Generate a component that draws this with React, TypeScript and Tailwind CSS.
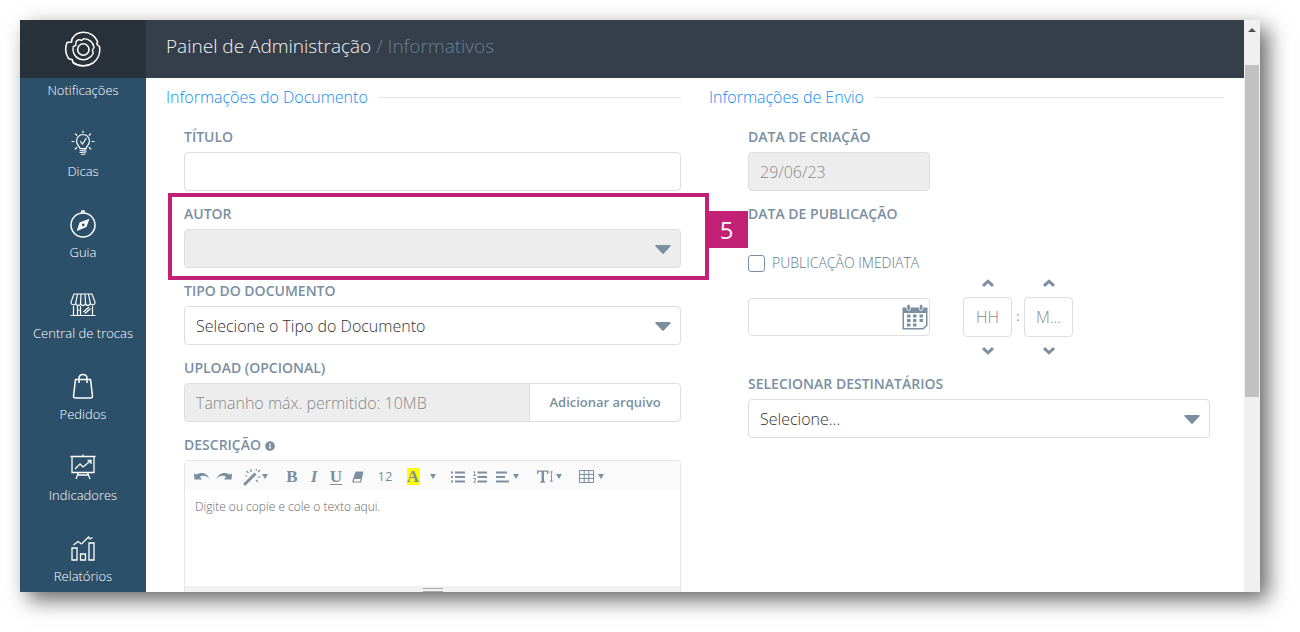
import React from 'react';
import { FaInfoCircle } from 'react-icons/fa';

type IconProps = { className?: string };

const LogoIcon: React.FC<IconProps> = ({ className }) => (
  <svg viewBox="0 0 38 38" className={className} fill="none" stroke="currentColor" strokeWidth="1.600" strokeLinejoin="round">
    <path d="M8 9C10.500 4.500 15 2.300 19.500 2.300C26 2.300 31.500 6 33.500 11.500L33 14.500L35.500 16.500C36.500 23 34 29.500 29 33C23 37 14.500 36.800 9 32.500L8.300 29.800L4.500 28.500C1.500 24 1 18 3 12.500L7.500 12Z" />
    <path d="M14.500 9.600L17.500 10.300L20 8.600C25 8.700 29.300 12.300 30 17.500L28.500 20L29.200 23.500C26.500 28.800 20.500 31 15.500 29C10.500 27 7.800 21.500 9.300 16.500L11.800 15.300L12 11.800C12.700 10.900 13.500 10.200 14.500 9.600Z" strokeWidth="1.400" />
    <circle cx="19.300" cy="19.500" r="5.700" />
  </svg>
);

const TipIcon = () => (
  <svg viewBox="0 0 28 28" className="size-7" fill="none" stroke="currentColor" strokeWidth="1.200" strokeLinecap="round">
    <path d="M11 19.500C11 17.500 7.500 16 7.500 12A6.500 6.500 0 0 1 20.500 12C20.500 16 17 17.500 17 19.500Z" />
    <path d="M11.500 12.500L13.500 15L17 9.500M11 21.500L17 20.800M11 23.500L17 22.800M12.500 25.500L16 25M14 2V3.500M6.500 5L7.800 6.200M21.500 5L20.200 6.200M3 12.500H4.800M23.200 12.500H25M6.200 20L7.800 18.500M21.800 20L20.200 18.500" />
  </svg>
);

const GuideIcon = () => (
  <svg viewBox="0 0 28 28" className="size-7" fill="none" stroke="currentColor" strokeWidth="1.500">
    <circle cx="14" cy="15" r="12" />
    <path d="M12.500 3L13 1H15L15.500 3" />
    <path fill="currentColor" stroke="none" fillRule="evenodd" d="M20.500 8.800L17.500 17L7.800 21L10.500 12.500ZM14.200 13.500A1.400 1.400 0 1 0 14.200 16.300A1.400 1.400 0 1 0 14.200 13.500Z" />
  </svg>
);

const StoreIcon = () => (
  <svg viewBox="0 0 28 28" className="size-7" fill="none" stroke="currentColor" strokeWidth="1.200">
    <path d="M5 3H23L26 11V12A2.400 2.400 0 0 1 21.300 12A2.400 2.400 0 0 1 16.500 12A2.400 2.400 0 0 1 11.600 12A2.400 2.400 0 0 1 6.700 12A2.400 2.400 0 0 1 2 12V11ZM8.500 3L6.700 12M12 3L11.600 12M16 3L16.500 12M19.500 3L21.300 12" />
    <path d="M4.500 15V24.500M8.500 15V24.500M11.500 15V24.500M23.500 15V24.500M1.500 24.500H26.500M9.800 18.500V20M14.500 21L20 16M16 22.500L21.500 17.500" />
  </svg>
);

const BagIcon = () => (
  <svg viewBox="0 0 28 28" className="size-7" fill="none" stroke="currentColor" strokeWidth="1.500" strokeLinejoin="round">
    <path d="M6.500 7.500H21.500L23.500 24C23.500 25.500 22.500 26 21.500 26H6.500C5.500 26 4.500 25.500 4.500 24ZM10 11V6.500C10 1 18 1 18 6.500V11" />
  </svg>
);

const BoardIcon = () => (
  <svg viewBox="0 0 28 28" className="size-7" fill="none" stroke="currentColor" strokeWidth="1.300">
    <path d="M1.500 3.500H26.500M14 1.500V3.500M3 3.500V19.500H25V3.500M9.500 19.500L7 26M18.500 19.500L21 26M9 22H19.500" />
    <path d="M6 16L11 11L14 14L22 7.500M18.500 7.500H22V11" />
  </svg>
);

const ReportIcon = () => (
  <svg viewBox="0 0 28 28" className="size-7" fill="none" stroke="currentColor" strokeWidth="1.300">
    <path d="M3 14H8V26H3ZM11.500 20H16.500V26H11.500ZM20 9H25V26H20Z" />
    <path d="M4.500 11L9 7.500L12.500 10L19.500 3L21 5L23.500 3.500" />
  </svg>
);

const MENU = [
  { label: 'Dicas', icon: <TipIcon /> },
  { label: 'Guia', icon: <GuideIcon /> },
  { label: 'Central de trocas', icon: <StoreIcon /> },
  { label: 'Pedidos', icon: <BagIcon /> },
  { label: 'Indicadores', icon: <BoardIcon /> },
  { label: 'Relatórios', icon: <ReportIcon /> },
];

const LABEL = 'block h-5 text-sm leading-[18px] font-semibold text-[#7b8fa0]';
const FIELD = 'mt-1 block h-[39px] w-full rounded border border-[#dedede] bg-white px-[11px] text-base font-light text-[#333] outline-none placeholder:text-[#888]';
const FIELD_DISABLED = 'mt-1 block h-[39px] w-full rounded border border-[#dedede] bg-[#ededed] px-[11px] text-base font-light text-[#888] outline-none placeholder:text-[#888]';

const Caret: React.FC<IconProps> = ({ className }) => (
  <svg viewBox="0 0 16 9" className={className} fill="currentColor">
    <path d="M1.200 0H14.800C15.800 0 16 .8 15.400 1.400L9 8.200C8.400 8.900 7.600 8.900 7 8.200L.6 1.400C0 .8.2 0 1.200 0Z" />
  </svg>
);

type SelectFieldProps = {
  id: string;
  label: string;
  option: string;
  disabled?: boolean;
};

const SelectField: React.FC<SelectFieldProps> = ({ id, label, option, disabled }) => (
  <div>
    <label htmlFor={id} className={LABEL}>{label}</label>
    <div className="relative">
      <select id={id} disabled={disabled} className={`appearance-none ${disabled ? FIELD_DISABLED : FIELD}`}>
        <option>{option}</option>
      </select>
      <Caret className="pointer-events-none absolute right-2.5 top-4 h-[9px] w-4 text-[#7b8fa0]" />
    </div>
  </div>
);

const SectionTitle: React.FC<{ children: React.ReactNode }> = ({ children }) => (
  <h2 className="mb-5 flex h-[22px] items-center gap-2.5 text-base font-light text-[#0d8bf2] after:h-px after:flex-1 after:bg-[#e5e5e5]">
    {children}
  </h2>
);

const SmallCaret = () => (
  <svg viewBox="0 0 6 5" className="h-[5px] w-1.5 shrink-0" fill="currentColor">
    <path d="M0 0H6L3 5Z" />
  </svg>
);

type ToolProps = { name: string; className: string; children: React.ReactNode };

const Tool: React.FC<ToolProps> = ({ name, className, children }) => (
  <button type="button" aria-label={name} className={`flex h-6 shrink-0 items-center justify-center ${className}`}>
    {children}
  </button>
);

const Toolbar = () => (
  <div className="flex h-[29px] items-center overflow-hidden bg-[#fafafa] pl-1.5 pt-0.5 text-[#7b8fa0]">
    <Tool name="Desfazer" className="w-[22px]">
      <svg viewBox="0 0 16 10" className="h-2.5 w-4" fill="currentColor">
        <path d="M0 1.500L2.500 2.500C6.500-.5 13 .5 15.800 7C12.500 3.500 8.500 3 6 4.800L8 7.500H.5Z" />
      </svg>
    </Tool>
    <Tool name="Refazer" className="w-[22px]">
      <svg viewBox="0 0 16 10" className="h-2.5 w-4" fill="currentColor">
        <path d="M16 1.500L13.500 2.500C9.500-.5 3 .5.2 7C3.500 3.500 7.500 3 10 4.800L8 7.500H15.500Z" />
      </svg>
    </Tool>
    <Tool name="Estilo" className="ml-1 w-8 gap-px">
      <svg viewBox="0 0 18 18" className="size-[18px]" fill="none" stroke="currentColor">
        <path d="M2 16L10 8" strokeWidth="3" strokeLinecap="round" />
        <path d="M10.500 7.500L12.500 5.500" strokeWidth="3" />
        <path d="M8 1V4M3.500 3L5.500 5M14.500 9H17.500M13 12L15 14M15 4L17 2M13 2.500L13.500 1M2 8H4" strokeWidth="1.200" />
      </svg>
      <SmallCaret />
    </Tool>
    <Tool name="Negrito" className="ml-2.5 w-[22px] font-['Liberation_Serif'] text-[17px] font-bold">B</Tool>
    <Tool name="Itálico" className="w-[22px] font-['Liberation_Serif'] text-[17px] font-bold italic">I</Tool>
    <Tool name="Sublinhado" className="w-[22px] font-['Liberation_Serif'] text-[17px] font-bold underline underline-offset-2">U</Tool>
    <Tool name="Limpar formatação" className="w-[22px]">
      <svg viewBox="0 0 12 12" className="size-3" fill="currentColor">
        <path fillRule="evenodd" d="M3.500 .5H11.500L9 11.500H.5V9.500ZM2.400 8L1.700 10.500H8L8.700 8Z" />
      </svg>
    </Tool>
    <Tool name="Tamanho da fonte" className="w-8 text-[13px]">12</Tool>
    <Tool name="Cor do texto" className="w-6">
      <span className="flex h-[17px] w-[13px] items-center justify-center bg-[#ffff00] font-['Liberation_Serif'] text-[17px] font-bold">A</span>
    </Tool>
    <Tool name="Mais cores" className="w-4"><SmallCaret /></Tool>
    <Tool name="Lista" className="ml-1.5 w-[22px]">
      <svg viewBox="0 0 14 12" className="h-3 w-3.5" stroke="currentColor" strokeWidth="2">
        <path d="M0 1.500H2M4 1.500H14M0 6H2M4 6H14M0 10.500H2M4 10.500H14" />
      </svg>
    </Tool>
    <Tool name="Lista numerada" className="w-[22px]">
      <svg viewBox="0 0 14 12" className="h-3 w-3.5" fill="none" stroke="currentColor">
        <path d="M4.500 1.500H14M4.500 6H14M4.500 10.500H14" strokeWidth="2" />
        <path d="M.5 1L1.500.5V4.500M0 4.500H3M.3 7.500H2.500V9L.5 11.200H3" strokeWidth=".9" />
      </svg>
    </Tool>
    <Tool name="Parágrafo" className="w-8 gap-1">
      <svg viewBox="0 0 13 12" className="h-3 w-[13px]" stroke="currentColor" strokeWidth="2">
        <path d="M0 1.500H11M0 6H9M0 10.500H13" />
      </svg>
      <SmallCaret />
    </Tool>
    <Tool name="Altura da linha" className="ml-2.5 w-8 gap-0.5">
      <svg viewBox="0 0 17 13" className="h-[13px] w-[17px]" fill="none" stroke="currentColor">
        <path d="M.7 4V1.200H10.800V4M3.500 12H8" strokeWidth="1.300" />
        <path d="M5.800 1V12" strokeWidth="2.400" />
        <path d="M14.500 1.500V11.500M13 2.500L14.500 1L16 2.500M13 10.500L14.500 12L16 10.500" strokeWidth=".9" />
      </svg>
      <SmallCaret />
    </Tool>
    <Tool name="Tabela" className="ml-2.5 w-8 gap-1">
      <svg viewBox="0 0 15 13" className="h-[13px] w-[15px] shrink-0" fill="none" stroke="currentColor">
        <path d="M.5 .5H14.500V12.500H.5ZM.5 4.500H14.500M.5 8.500H14.500M5.200 .5V12.500M9.800 .5V12.500" />
      </svg>
      <SmallCaret />
    </Tool>
  </div>
);

const Chevron: React.FC<IconProps> = ({ className }) => (
  <svg viewBox="0 0 12 8" className={className} fill="none" stroke="currentColor" strokeWidth="3">
    <path d="M1 6.800L6 2.200L11 6.800" />
  </svg>
);

const TimeSpinner: React.FC<{ name: string; placeholder: string }> = ({ name, placeholder }) => (
  <div className="flex flex-col items-center gap-1 text-[#7b8fa0]">
    <button type="button" aria-label={`Aumentar ${name}`} className="flex h-5 w-8 items-center justify-center">
      <Chevron className="h-2 w-3" />
    </button>
    <input
      type="text"
      aria-label={name}
      placeholder={placeholder}
      className="h-10 w-[49px] rounded border border-[#dedede] text-center text-base font-light outline-none placeholder:text-[#888]"
    />
    <button type="button" aria-label={`Diminuir ${name}`} className="flex h-5 w-8 items-center justify-center">
      <Chevron className="h-2 w-3 rotate-180" />
    </button>
  </div>
);

const CalendarIcon: React.FC<IconProps> = ({ className }) => (
  <svg viewBox="0 0 26 26" className={className} fill="currentColor">
    <path fillRule="evenodd" d="M.5 3.500H25.500V21.500L21.500 25.500H.5ZM2 9V24H20.800L24 21V9Z" />
    <rect x="4.800" y=".2" width="3.600" height="6.300" rx="1.800" stroke="#fff" strokeWidth=".8" />
    <rect x="17.300" y=".2" width="3.600" height="6.300" rx="1.800" stroke="#fff" strokeWidth=".8" />
    <path d="M5 10.500H8.500V13.500H5ZM11 10.500H14.500V13.500H11ZM17.500 10.500H21V13.500H17.500ZM5 15H8.500V18H5ZM11 15H14.500V18H11ZM17.500 15H21V18H17.500ZM5 19.500H8.500V22.500H5ZM11 19.500H14.500V22.500H11Z" />
  </svg>
);

const Sidebar = () => (
  <aside className="flex w-[126px] shrink-0 flex-col overflow-hidden bg-[#2c4f6a] text-white">
    <div className="flex h-[58px] shrink-0 items-center justify-center bg-[#29313a]">
      <LogoIcon className="size-[38px]" />
    </div>
    <nav className="flex flex-col gap-[29px] pt-0.5 text-center text-[13px] leading-5 font-light">
      <a href="#notificacoes">Notificações</a>
      {MENU.map((item) => (
        <a key={item.label} href="#menu" className="flex flex-col items-center gap-1">
          {item.icon}
          {item.label}
        </a>
      ))}
    </nav>
  </aside>
);

const DocumentSection = () => (
  <section>
    <SectionTitle>Informações do Documento</SectionTitle>
    <div className="flex flex-col gap-3.5 pl-[18px]">
      <div>
        <label htmlFor="titulo" className={LABEL}>TÍTULO</label>
        <input id="titulo" type="text" className={FIELD} />
      </div>
      <div className="relative">
        <SelectField id="autor" label="AUTOR" option="" disabled />
        <div className="pointer-events-none absolute -inset-y-3 -left-4 -right-7 border-4 border-[#c32175]">
          <span className="absolute left-full top-3.5 flex h-[37px] w-[43px] items-center justify-center bg-[#c32175] text-2xl text-white">5</span>
        </div>
      </div>
      <SelectField id="tipo" label="TIPO DO DOCUMENTO" option="Selecione o Tipo do Documento" />
      <div>
        <label htmlFor="upload" className={LABEL}>UPLOAD (OPCIONAL)</label>
        <div className="mt-1 flex h-[39px] overflow-hidden rounded border border-[#dedede]">
          <input
            id="upload"
            type="text"
            disabled
            placeholder="Tamanho máx. permitido: 10MB"
            className="min-w-0 flex-1 bg-[#ededed] px-[11px] text-base font-light placeholder:text-[#888]"
          />
          <button type="button" className="w-[151px] border-l border-[#dedede] text-[13px] font-semibold text-[#7b8fa0]">
            Adicionar arquivo
          </button>
        </div>
      </div>
      <div>
        <label htmlFor="descricao" className={`${LABEL} flex! gap-1`}>
          DESCRIÇÃO <FaInfoCircle size={10} className="mt-[5px]" />
        </label>
        <div className="mt-1 overflow-hidden rounded border border-[#e5e5e5]">
          <Toolbar />
          <textarea
            id="descricao"
            placeholder="Digite ou copie e cole o texto aqui."
            className="block h-24 w-full resize-none px-2.5 py-[7px] text-xs leading-5 font-light outline-none placeholder:text-[#666]"
          />
          <div className="flex h-4 flex-col items-center gap-0.5 bg-[#f2f2f2] pt-0.5">
            <span className="h-px w-5 bg-[#a9a9a9]" />
            <span className="h-px w-5 bg-[#a9a9a9]" />
          </div>
        </div>
      </div>
    </div>
  </section>
);

const DeliverySection = () => (
  <section>
    <SectionTitle>Informações de Envio</SectionTitle>
    <div className="pl-[39px] pr-3.5">
      <div className="w-[182px]">
        <label htmlFor="criacao" className={LABEL}>DATA DE CRIAÇÃO</label>
        <input id="criacao" type="text" disabled defaultValue="29/06/23" className={FIELD_DISABLED} />
      </div>
      <label htmlFor="publicacao" className={`${LABEL} mt-3.5`}>DATA DE PUBLICAÇÃO</label>
      <label className="mt-7 flex h-5 items-center gap-[7px] text-sm font-light text-[#60778b]">
        <input type="checkbox" className="size-[17px] appearance-none rounded-[3px] border border-[#7b8fa0] bg-white" />
        PUBLICAÇÃO IMEDIATA
      </label>
      <div className="flex items-center">
        <div className="relative mr-[33px] w-[182px]">
          <input id="publicacao" type="text" className="block h-[38px] w-full rounded border border-[#dedede] px-[11px] text-base font-light outline-none" />
          <button type="button" aria-label="Abrir calendário" className="absolute right-0.5 top-1.5 text-[#7b8fa0]">
            <CalendarIcon className="size-[26px]" />
          </button>
        </div>
        <TimeSpinner name="hora" placeholder="HH" />
        <span className="w-3 text-center text-[13px] text-[#7b8fa0]">:</span>
        <TimeSpinner name="minuto" placeholder="M..." />
      </div>
      <div className="mt-3.5">
        <SelectField id="destinatarios" label="SELECIONAR DESTINATÁRIOS" option="Selecione..." />
      </div>
    </div>
  </section>
);

const Scrollbar = () => (
  <div aria-hidden="true" className="flex w-4 shrink-0 flex-col items-center bg-[#f0f0f0]">
    <div className="flex h-[45px] shrink-0 justify-center pt-2">
      <svg viewBox="0 0 8 4" className="h-1 w-2" fill="#505050">
        <path d="M0 4L4 0L8 4Z" />
      </svg>
    </div>
    <div className="h-[58%] w-3.5 bg-[#c1c1c1]" />
  </div>
);

export default function App() {
  return (
    <div className="h-screen overflow-hidden bg-white pb-10 pl-5 pr-10 pt-5 font-['Open_Sans',sans-serif]">
      <div className="flex h-full bg-white shadow-[8px_8px_20px_rgba(0,0,0,0.6)]">
        <Sidebar />
        <div className="flex min-w-0 flex-1 flex-col">
          <header className="flex h-[58px] shrink-0 items-center bg-[#353f4b] px-5 pb-1.5 text-[19px] font-light">
            <h1 className="text-[#f2f4f6]">Painel de Administração</h1>
            <span className="whitespace-pre text-[#6b7f92]"> / Informativos</span>
          </header>
          <main className="grid min-h-0 flex-1 grid-cols-2 gap-7 overflow-hidden px-5 pt-2">
            <DocumentSection />
            <DeliverySection />
          </main>
        </div>
        <Scrollbar />
      </div>
    </div>
  );
}
